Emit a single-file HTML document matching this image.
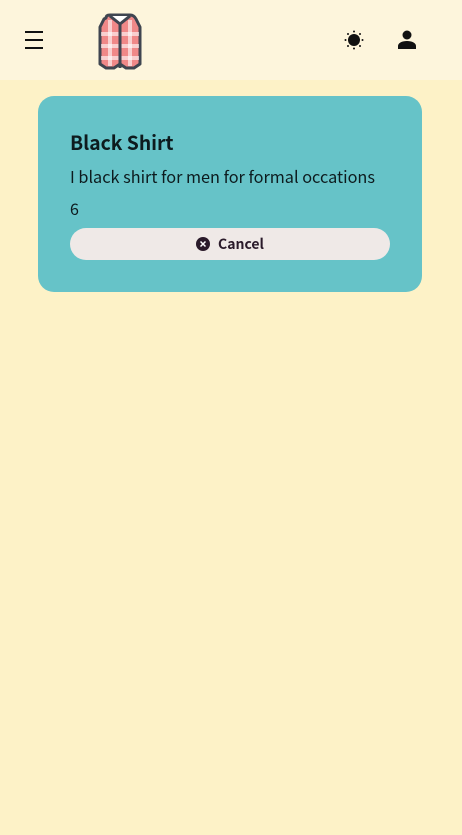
<!DOCTYPE html><html><head><style>
body{margin:0;width:462px;height:835px;background:#fdf2c7;font-family:"Noto Sans CJK JP","Liberation Sans",sans-serif;overflow:hidden;position:relative}
.hdr{position:absolute;left:0;top:0;width:462px;height:80px;background:#fdf5dc}
.card{position:absolute;left:38px;top:96px;width:384px;height:196px;background:#66c3c8;border-radius:16px}
h1{position:absolute;left:32px;top:31px;margin:0;font-size:19.3px;font-weight:bold;color:#0d1b1e;line-height:30px}
.d{position:absolute;left:32px;top:68px;font-size:16.25px;color:#0d1b1e;line-height:24px}
.n{position:absolute;left:32px;top:100px;font-size:16px;color:#0d1b1e;line-height:24px}
.btn{position:absolute;left:32px;top:132px;width:320px;height:32px;background:#efe9e7;border-radius:16px;display:flex;align-items:center;justify-content:center;font-size:14px;font-weight:bold;color:#2a1a2a;gap:8px}
</style></head><body>
<div class="hdr">
<svg style="position:absolute;left:24px;top:30px" width="20" height="20"><path d="M1 2h18M1 10h18M1 18h18" stroke="#111" stroke-width="2"/></svg>
<svg style="position:absolute;left:96px;top:12px" width="48" height="58" viewBox="0 0 48 58">
<path d="M10 6q0-3 4-3h20q4 0 6 4l4 8v37l-6 4h-8l-6-4-6 4h-8l-6-4V15l4-8z" fill="#f08888" stroke="#3f4550" stroke-width="3" stroke-linejoin="round"/>
<path d="M5 22h38M5 34h38M5 46h38" stroke="#fff" stroke-width="4" opacity=".6"/>
<path d="M14 8v46M34 8v46" stroke="#fff" stroke-width="4" opacity=".6"/>
<path d="M24 10v46" stroke="#3f4550" stroke-width="3"/>
<path d="M14 4l10 8 10-8" fill="#fff" stroke="#3f4550" stroke-width="3"/>
</svg>
<svg style="position:absolute;left:344px;top:30px" width="20" height="20"><circle cx="10" cy="10" r="6" fill="#111"/><g fill="#111"><circle cx="10" cy="1.5" r="1"/><circle cx="10" cy="18.5" r="1"/><circle cx="1.5" cy="10" r="1"/><circle cx="18.5" cy="10" r="1"/><circle cx="4" cy="4" r="1"/><circle cx="16" cy="4" r="1"/><circle cx="4" cy="16" r="1"/><circle cx="16" cy="16" r="1"/></g></svg>
<svg style="position:absolute;left:397px;top:30px" width="20" height="20"><circle cx="10" cy="5" r="4.5" fill="#111"/><path d="M1 19v-3c0-3 4-5 9-5s9 2 9 5v3z" fill="#111"/></svg>
</div>
<div class="card"><h1>Black Shirt</h1><div class="d">I black shirt for men for formal occations</div><div class="n">6</div>
<div class="btn"><svg width="14" height="14"><circle cx="7" cy="7" r="7" fill="#2a1a2a"/><path d="M4.5 4.5l5 5M9.5 4.5l-5 5" stroke="#fff" stroke-width="1.5"/></svg>Cancel</div></div>
</body></html>
